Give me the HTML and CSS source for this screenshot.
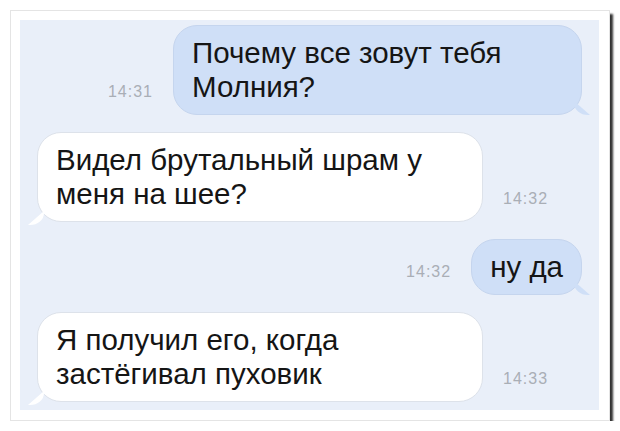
FILE: index.html
```html
<!DOCTYPE html>
<html lang="ru">
<head>
  <meta charset="UTF-8" />
  <title>Молния</title>
  <link rel="stylesheet" href="styles.css">
</head>
<body>

  <div class="card">
    <div class="chat">

      <div class="row out">
        <span class="time">14:31</span>
        <div class="bubble blue first">Почему все зовут тебя Молния?</div>
      </div>

      <div class="row in">
        <div class="bubble white">Видел брутальный шрам у меня на шее?</div>
        <span class="time">14:32</span>
      </div>

      <div class="row out">
        <span class="time">14:32</span>
        <div class="bubble blue">ну да</div>
      </div>

      <div class="row in">
        <div class="bubble white">Я получил его, когда застёгивал пуховик</div>
        <span class="time">14:33</span>
      </div>

    </div>
  </div>

</body>
</html>
```

FILE: styles.css
```css
html, body {
  margin: 0;
  padding: 0;
  background: #fff;
  font-family: "Liberation Sans", Arial, sans-serif;
}

.card {
  margin: 10px 0 0 10px;
  width: 579px;
  height: 390px;
  padding: 9px 10px 10px 9px;
  background: #fff;
  border: 1px solid #e4e4e4;
  box-shadow: 3px 4px 2px #333;
}

.chat {
  height: 100%;
  background: #e9eff9;
  display: flex;
  flex-direction: column;
  gap: 17px;
  padding: 5px 17px 0 17px;
  box-sizing: border-box;
}

.row {
  display: flex;
  align-items: last baseline;
  gap: 20px;
}

.row.out {
  justify-content: flex-end;
}

.time {
  font-size: 16px;
  color: #a9aeb6;
  letter-spacing: 1px;
}

.bubble {
  position: relative;
  font-size: 29.5px;
  line-height: 34px;
  color: #151515;
  padding: 10px 18px;
  border-radius: 24px;
  box-sizing: border-box;
}

.bubble.blue {
  background: #cfdff7;
  border: 1px solid #c5d5ee;
}

.bubble.first {
  width: 409px;
}

.bubble.white {
  width: 446px;
  background: #fff;
  border: 1px solid #dde2ea;
}

/* tails */
.bubble.blue::after {
  content: "";
  position: absolute;
  right: -9px;
  bottom: -1px;
  width: 16px;
  height: 14px;
  background: #cfdff7;
  border-bottom-left-radius: 14px 12px;
  clip-path: polygon(0 0, 100% 100%, 0 100%);
}

.bubble.white::after {
  content: "";
  position: absolute;
  left: -10px;
  bottom: -4px;
  width: 16px;
  height: 14px;
  background: #fff;
  border-bottom-right-radius: 14px 12px;
  clip-path: polygon(100% 0, 100% 100%, 0 100%);
}
```
